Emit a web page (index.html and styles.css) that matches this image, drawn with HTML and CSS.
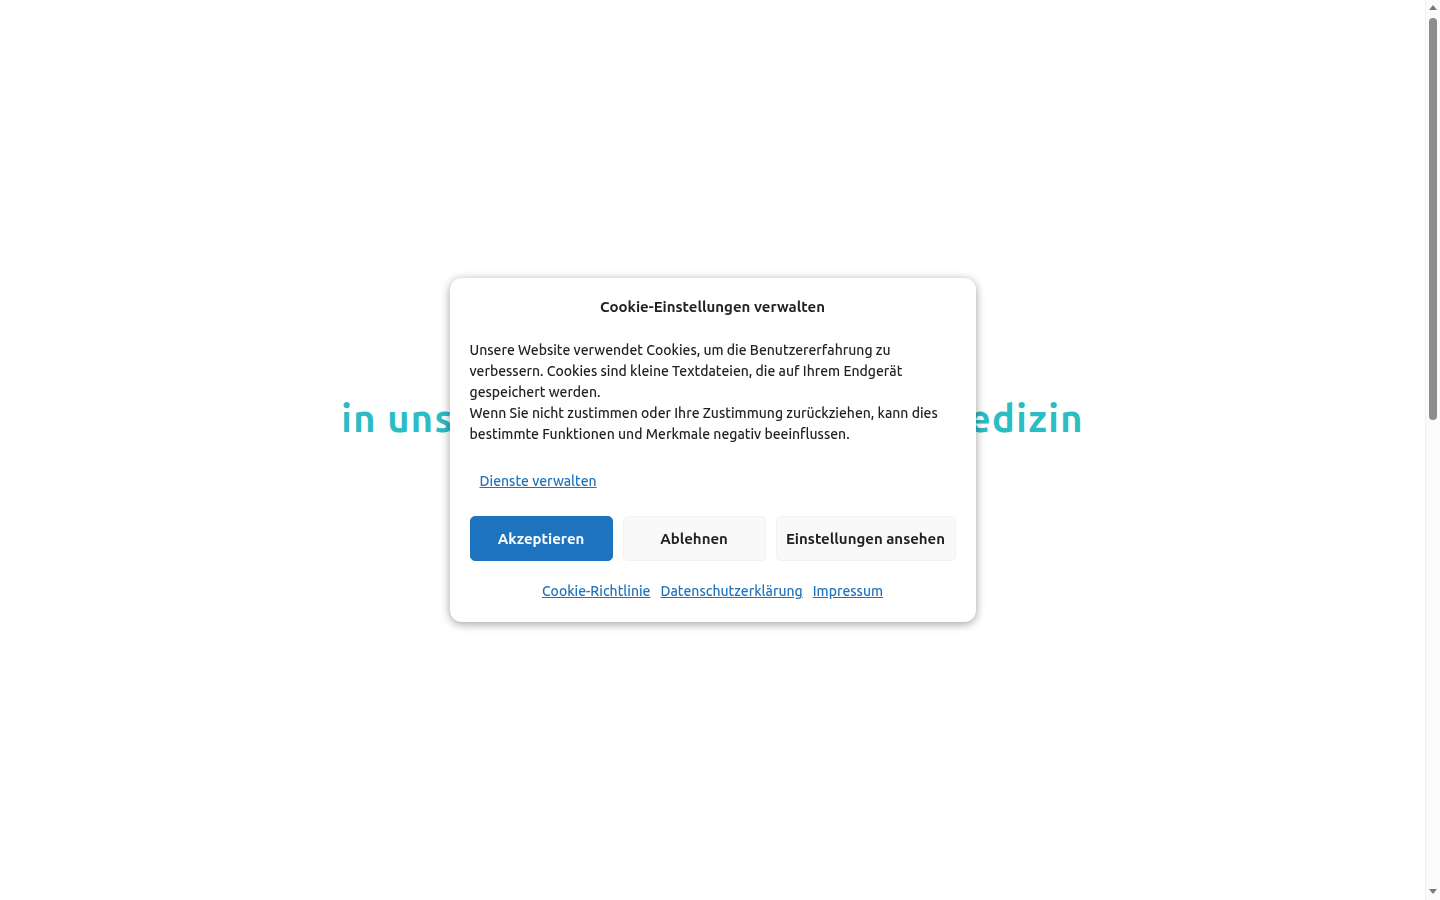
FILE: index.html
```html
<!DOCTYPE html>
<html lang="de">
<head>
<meta charset="utf-8">
<title>Cookie-Einstellungen</title>
<link rel="stylesheet" href="styles.css">
</head>
<body>
<main class="page">
  <section class="hero">
    <h1 class="hero-title">in unserer Praxis für Allgemeinmedizin</h1>
  </section>
</main>

<div class="scrollbar" aria-hidden="true">
  <div class="sb-arrow sb-up"></div>
  <div class="sb-track"><div class="sb-thumb"></div></div>
  <div class="sb-arrow sb-down"></div>
</div>

<div class="cookie-banner" role="dialog" aria-label="Cookie-Einstellungen verwalten">
  <div class="cookie-title">Cookie-Einstellungen verwalten</div>
  <div class="cookie-message">Unsere Website verwendet Cookies, um die Benutzererfahrung zu verbessern. Cookies sind kleine Textdateien, die auf Ihrem Endgerät gespeichert werden.<br>Wenn Sie nicht zustimmen oder Ihre Zustimmung zurückziehen, kann dies bestimmte Funktionen und Merkmale negativ beeinflussen.</div>
  <div class="cookie-manage"><a href="#" class="cookie-link">Dienste verwalten</a></div>
  <div class="cookie-buttons">
    <button class="btn btn-accept">Akzeptieren</button>
    <button class="btn btn-plain btn-deny">Ablehnen</button>
    <button class="btn btn-plain btn-prefs">Einstellungen ansehen</button>
  </div>
  <div class="cookie-docs">
    <a href="#" class="cookie-link">Cookie-Richtlinie</a>
    <a href="#" class="cookie-link">Datenschutzerklärung</a>
    <a href="#" class="cookie-link">Impressum</a>
  </div>
</div>
</body>
</html>
```

FILE: styles.css
```css
html, body {
  margin: 0;
  padding: 0;
  background: #ffffff;
}

body {
  font-family: "Ubuntu", "Lato", "Noto Sans", sans-serif;
  color: #222222;
}

.page {
  min-height: 1950px;
  padding-right: 15px;
}

.hero {
  padding-top: 395px;
  display: flex;
  justify-content: center;
}

.hero-title {
  margin: 0;
  font-size: 38px;
  line-height: 46px;
  font-weight: 700;
  color: #2bbcc4;
  letter-spacing: 1.4px;
  white-space: nowrap;
}

/* fake browser scrollbar */
.scrollbar {
  position: fixed;
  top: 0;
  right: 0;
  width: 15px;
  height: 100vh;
  background: #fbfbfb;
  border-left: 1px solid #f0f0f0;
  box-sizing: border-box;
  display: flex;
  flex-direction: column;
  align-items: center;
}

.sb-arrow {
  width: 0;
  height: 0;
  border-left: 4px solid transparent;
  border-right: 4px solid transparent;
}

.sb-up {
  margin-top: 5px;
  border-bottom: 5px solid #7a7a7a;
}

.sb-down {
  margin-bottom: 6px;
  border-top: 5px solid #7a7a7a;
}

.sb-track {
  flex: 1;
  width: 100%;
  display: flex;
  justify-content: center;
  padding-top: 8px;
}

.sb-thumb {
  width: 8px;
  height: 402px;
  border-radius: 4px;
  background: #8c8c8c;
}

.cookie-banner {
  position: fixed;
  top: 50%;
  left: calc(50% - 7.5px);
  transform: translate(-50%, -50%);
  width: 526px;
  box-sizing: border-box;
  padding: 21px 20px 20px;
  background: #ffffff;
  border-radius: 12px;
  box-shadow: 0 2px 10px rgba(0, 0, 0, 0.38);
  display: flex;
  flex-direction: column;
}

.cookie-title {
  font-size: 15px;
  line-height: 16px;
  font-weight: 700;
  text-align: center;
  color: #222222;
}

.cookie-message {
  margin-top: 25px;
  font-size: 14px;
  line-height: 21px;
  font-weight: 500;
}

.cookie-manage {
  margin-top: 26px;
  padding-left: 10px;
  font-size: 14px;
  line-height: 21px;
  font-weight: 500;
}

.cookie-link {
  color: #1e73be;
  text-decoration: underline;
}

.cookie-buttons {
  margin-top: 24px;
  display: flex;
  gap: 10px;
}

.btn {
  height: 45px;
  box-sizing: border-box;
  border-radius: 5px;
  font-family: inherit;
  font-size: 15px;
  font-weight: 700;
  padding: 0;
  white-space: nowrap;
  cursor: pointer;
}

.btn-accept {
  width: 143px;
  background: #1e73be;
  border: 1px solid #1e73be;
  color: #ffffff;
}

.btn-plain {
  background: #f9f9f9;
  border: 1px solid #f2f2f2;
  color: #222222;
}

.btn-deny {
  width: 143px;
}

.btn-prefs {
  width: 180px;
}

.cookie-docs {
  margin-top: 20px;
  display: flex;
  justify-content: center;
  gap: 10px;
  font-size: 14px;
  line-height: 21px;
  font-weight: 500;
}
```
